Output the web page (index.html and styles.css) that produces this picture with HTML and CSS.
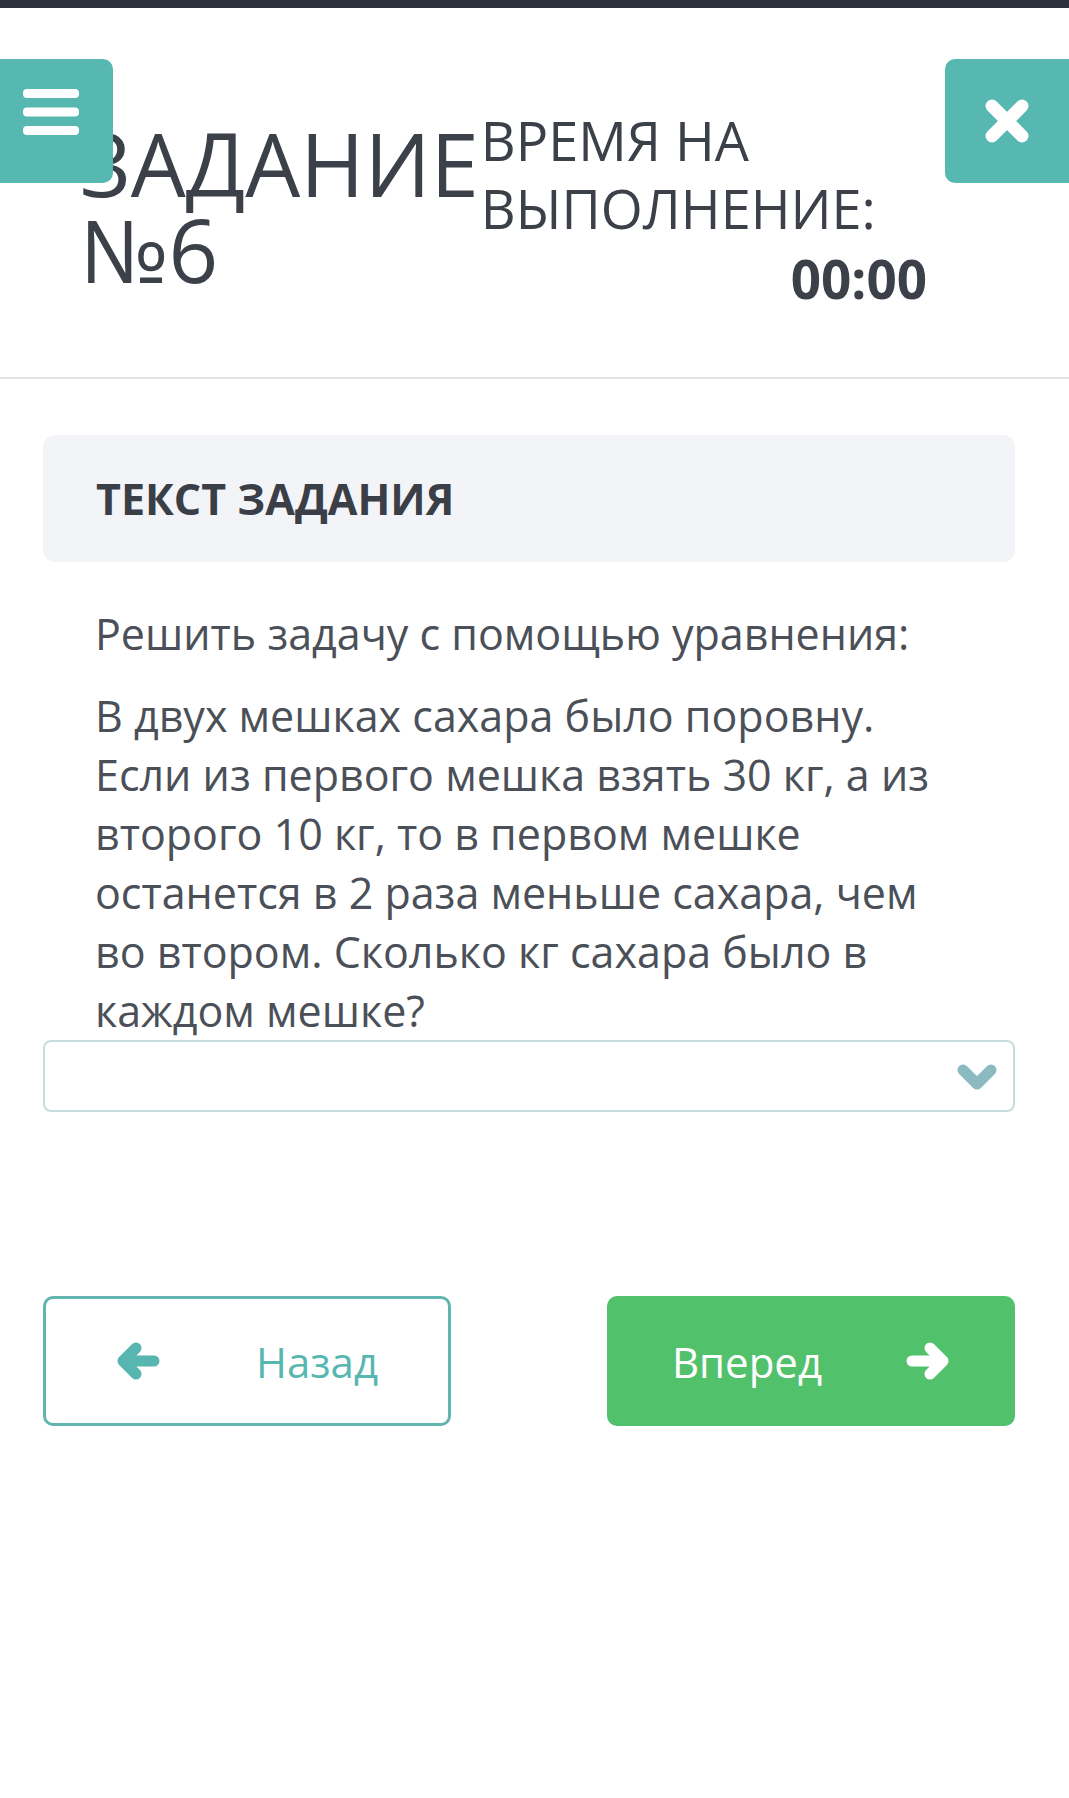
FILE: index.html
```html
<!DOCTYPE html>
<html lang="ru">
<head>
<meta charset="utf-8">
<meta name="viewport" content="width=device-width, initial-scale=1.0">
<title>Задание №6</title>
<link rel="stylesheet" href="styles.css">
</head>
<body>
	<header class="top">
		<div class="task-head">
			<h1 class="task-title">ЗАДАНИЕ №6</h1>
			<div class="timer">
				<div class="timer-label">ВРЕМЯ НА ВЫПОЛНЕНИЕ:</div>
				<div class="timer-value">00:00</div>
			</div>
		</div>
		<button class="menu-btn" type="button">
			<svg width="56" height="46" viewBox="0 0 56 46">
				<rect x="0" y="0" width="56" height="9" rx="4" fill="#fff"/>
				<rect x="0" y="18.5" width="56" height="9" rx="4" fill="#fff"/>
				<rect x="0" y="37" width="56" height="9" rx="4" fill="#fff"/>
			</svg>
		</button>
		<button class="close-btn" type="button">
			<svg width="46" height="44" viewBox="0 0 46 44">
				<path d="M8 7 L38 37 M38 7 L8 37" stroke="#fff" stroke-width="13" stroke-linecap="round" fill="none"/>
			</svg>
		</button>
	</header>

	<div class="content">
		<div class="task-panel">
			<h2>ТЕКСТ ЗАДАНИЯ</h2>
		</div>
		<div class="task-text">
			<p class="lead">Решить задачу с помощью уравнения:</p>
			<p>В двух мешках сахара было поровну. Если из первого мешка взять 30 кг, а из второго 10 кг, то в первом мешке останется в 2 раза меньше сахара, чем во втором. Сколько кг сахара было в каждом мешке?</p>
		</div>
		<div class="answer-select">
			<svg width="40" height="28" viewBox="0 0 40 28">
				<path d="M6 6 L20 20 L34 6" stroke="#8cbac1" stroke-width="11" stroke-linecap="round" stroke-linejoin="round" fill="none"/>
			</svg>
		</div>

		<div class="nav">
			<button class="nav-btn back" type="button">
				<svg width="44" height="38" viewBox="0 0 44 38">
					<path d="M38 19 L8 19 M20 6 L7 19 L20 32" stroke="#58b6b0" stroke-width="11" stroke-linecap="round" stroke-linejoin="round" fill="none"/>
				</svg>
				<span>Назад</span>
			</button>
			<button class="nav-btn next" type="button">
				<span>Вперед</span>
				<svg width="44" height="38" viewBox="0 0 44 38">
					<path d="M6 19 L36 19 M24 6 L37 19 L24 32" stroke="#fff" stroke-width="11" stroke-linecap="round" stroke-linejoin="round" fill="none"/>
				</svg>
			</button>
		</div>
	</div>
</body>
</html>
```

FILE: styles.css
```css
body {
	margin: 0;
	background-color: #fff;
	font-family: "Open Sans", "Noto Sans", sans-serif;
	color: #3b4049;
}

button {
	font-family: inherit;
	cursor: pointer;
}

/* header */
.top {
	position: relative;
	border-top: 8px solid #2c323d;
	border-bottom: 2px solid #e3e4e6;
	padding: 98px 142px 62px 80px;
}
.task-head {
	display: flex;
	align-items: flex-start;
	gap: 2px;
}
.task-title {
	width: min-content;
	margin: 14px 0 0;
	font-size: 87px;
	line-height: 86px;
	font-weight: 400;
	color: #3b4049;
}
.timer {
	flex: 1;
}
.timer-label {
	font-size: 54px;
	line-height: 68px;
	color: #3b4049;
}
.timer-value {
	text-align: right;
	font-size: 53px;
	font-weight: 700;
	color: #3b4049;
}

.menu-btn,
.close-btn {
	position: absolute;
	top: 51px;
	width: 113px;
	height: 124px;
	border: none;
	background-color: #56b8b1;
	display: flex;
	align-items: center;
	justify-content: center;
	padding: 0;
}
.menu-btn {
	left: 0;
	border-radius: 0 10px 10px 0;
	justify-content: flex-start;
	padding-left: 23px;
}
.menu-btn svg {
	margin-top: -18px;
}
.close-btn {
	right: 0;
	width: 124px;
	border-radius: 10px 0 0 10px;
	justify-content: flex-start;
	padding-left: 39px;
}

/* content */
.content {
	padding: 56px 54px 0 43px;
}
.task-panel {
	display: flex;
	align-items: center;
	height: 127px;
	padding-left: 53px;
	background-color: #f3f4f8;
	border-radius: 12px;
}
.task-panel h2 {
	margin: 0;
	font-size: 43px;
	font-weight: 700;
	color: #3a3f47;
}

.task-text {
	padding: 0 52px;
	font-size: 43px;
	color: #4b5058;
}
.task-text p {
	margin: 23px 0 0;
}
.task-text p.lead {
	margin-top: 42px;
}

.answer-select {
	margin-top: 0;
	height: 68px;
	border: 2px solid #c8dcdd;
	border-radius: 8px;
	display: flex;
	align-items: center;
	justify-content: flex-end;
	padding-right: 16px;
}
.answer-select svg {
	margin-top: 4px;
}

.nav {
	display: flex;
	justify-content: space-between;
	margin-top: 184px;
}
.nav-btn {
	width: 408px;
	height: 130px;
	border-radius: 10px;
	display: flex;
	align-items: center;
	justify-content: center;
	font-size: 42px;
	padding: 0;
}
.nav-btn.back {
	background-color: #fff;
	border: 3px solid #62b4ae;
	color: #58b6b0;
	gap: 96px;
}
.nav-btn.next {
	background-color: #52c16c;
	border: none;
	color: #fff;
	gap: 84px;
}
```
